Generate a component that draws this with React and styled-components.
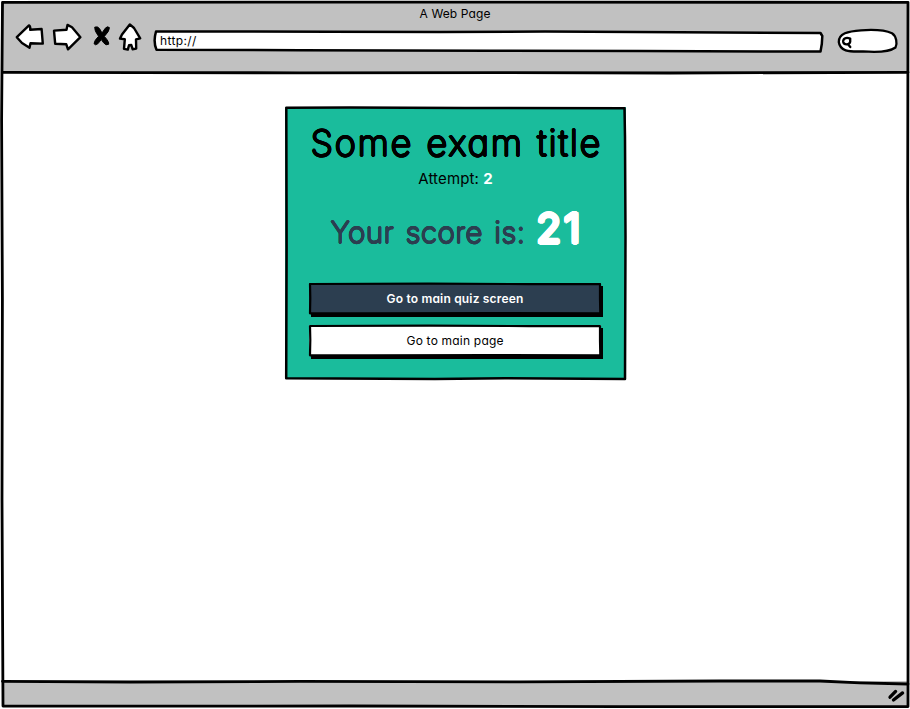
import React from "react";
import styled, { createGlobalStyle } from "styled-components";

const GlobalStyle = createGlobalStyle`
  * { box-sizing: border-box; }
  html, body { margin: 0; padding: 0; background: #fff; overflow: hidden; }
  body { font-family: Inter, "Open Sans", sans-serif; font-feature-settings: "cv11" 1; color: #000; }
`;

const Window = styled.div`
  position: relative;
  width: 910px;
  height: 709px;
  padding: 2px 2px 3px;
  display: flex;
  flex-direction: column;
  background: #fff;
`;

const Chrome = styled.header`
  height: 71px;
  flex: none;
  background: #c1c1c1;
`;

const Title = styled.div`
  height: 20px;
  text-align: center;
`;

const Toolbar = styled.div`
  display: flex;
  height: 31px;
  align-items: flex-start;
  padding-left: 13px;
`;

const NavIcon = styled.svg`
  display: block;
  flex: none;
  width: ${(p) => p.$w}px;
  height: 30px;
  margin-right: ${(p) => p.$gap}px;
  overflow: visible;
  fill: ${(p) => p.$fill || "#fff"};
  stroke: #000;
  stroke-width: ${(p) => p.$line || 2.4};
  stroke-linejoin: round;
  stroke-linecap: round;
`;

const Field = styled.div`
  position: relative;
  display: flex;
  align-items: center;
  width: ${(p) => p.$w}px;
  height: 24px;
  margin-top: 7px;
  margin-right: ${(p) => p.$gap || 0}px;
  padding: 0 0 1px 7px;
`;

const Outline = styled.svg`
  position: absolute;
  inset: 0;
  width: 100%;
  height: 100%;
  overflow: visible;
  pointer-events: none;
  fill: ${(p) => p.$fill || "none"};
  stroke: #000;
  stroke-width: ${(p) => p.$line || 2.5};
  stroke-linejoin: round;
  stroke-linecap: round;
`;

// Thickens a light face evenly in every direction, which rounds the stroke ends.
const rounded = (r, color) =>
  Array.from({ length: 12 }, (_, i) => {
    const a = (i * Math.PI) / 6;
    return `${(r * Math.cos(a)).toFixed(2)}px ${(r * Math.sin(a)).toFixed(2)}px 0 ${color}`;
  }).join(", ");

const Text = styled.span`
  position: relative;
  display: inline-block;
  white-space: pre;
  font-size: ${(p) => p.$size}px;
  line-height: ${(p) => p.$lh || p.$size * 1.3}px;
  font-weight: ${(p) => p.$weight || 400};
  letter-spacing: ${(p) => p.$track || 0}px;
  word-spacing: ${(p) => p.$word || 0}px;
  margin-right: ${(p) => -(p.$track || 0)}px;
  color: ${(p) => p.$color || "#000"};
  text-shadow: ${(p) => (p.$round ? rounded(p.$round, p.$color || "#000") : "none")};
`;

const Page = styled.main`
  flex: 1;
  display: flex;
  justify-content: center;
  align-items: flex-start;
  padding-top: 34px;
`;

const Card = styled.section`
  position: relative;
  width: 341px;
  height: 272px;
  margin-left: 1px;
  padding: 11px 24px 0;
  background: #1abc9c;
  display: flex;
  flex-direction: column;
`;

const Line = styled.div`
  display: flex;
  justify-content: center;
  align-items: baseline;
  height: ${(p) => p.$h}px;
`;

const Actions = styled.div`
  display: flex;
  flex-direction: column;
  gap: 11px;
`;

const Button = styled.button`
  position: relative;
  display: flex;
  align-items: center;
  justify-content: center;
  width: 292px;
  height: 31px;
  padding: 0;
  border: 0;
  font-family: inherit;
  font-feature-settings: inherit;
  background: ${(p) => p.$bg};
  box-shadow: 2px 3px 0 #000;
`;

const StatusBar = styled.footer`
  height: 25px;
  flex: none;
  display: flex;
  justify-content: flex-end;
  align-items: center;
  padding-right: 4px;
  background: #c1c1c1;
`;

const Grip = styled.svg`
  width: 16px;
  height: 14px;
  margin-top: 4px;
  stroke: #000;
  stroke-width: 3.3;
  stroke-linecap: round;
  overflow: visible;
`;

function SketchButton({ bg, children }) {
  return (
    <Button $bg={bg}>
      <Outline $line={2.2} viewBox="0 0 292 31">
        <path d="M1 1L120 .7 220 1.1 291 1 291 16 291.3 30.3 180 30 60 30.4 1 30.3 1.3 15Z" />
      </Outline>
      {children}
    </Button>
  );
}

export default function App() {
  return (
    <>
      <GlobalStyle />
      <Window>
        <Chrome>
          <Title>
            <Text $size={12} $lh={21} $track={0.1}>A Web Page</Text>
          </Title>
          <Toolbar>
            <NavIcon $w={29} $gap={8} viewBox="15 22 29 30">
              <path d="M16.8 37.2 29 25.4Q30.6 26 30.2 29.8L41.6 29 42.8 43.6 30.5 43.2 29.5 47.8 22 43Z" />
            </NavIcon>
            <NavIcon $w={29} $gap={12} viewBox="52 22 29 30">
              <path d="M54 30.6 66.5 29.8 67.5 24.9 72 27.3 80.4 37.2 68 49.3 66.3 44.3 55.2 43.8Z" />
            </NavIcon>
            <NavIcon $w={17} $gap={8} $line={1} $fill="#000" viewBox="93 22 17 30">
              <path d="M95 27.2Q97.5 25.8 99.5 28.6L102 33 105.3 28.2Q107.5 25.8 109.4 27.6 109.8 31 104.3 36.4 109.5 42 108.6 44.3 106 46 103.6 42.8L101.3 39.6 97.8 43.8Q95 45.8 94 43.6 94.3 40.5 98.6 36.3 93.8 29.8 95 27.2Z" />
            </NavIcon>
            <NavIcon $w={23} $gap={12} viewBox="118 22 23 30">
              <path d="M129.8 24.4 134 28 140.2 38.3 136 39.4 136.2 48.6 132.6 49.2 131.3 45 129 45.2 127.8 49.6 124 48.8 124.8 39.3 120 38.6 122 34.5Z" />
            </NavIcon>
            <Field $w={671} $gap={12}>
              <Outline $fill="#fff" viewBox="153 29 671 24">
                <path d="M156 31.5 330 31.7 440 32 545 31.6 680 32.3 820.5 33 822.3 36 821.8 44 820.5 51.6 640 51 490 50.7 300 50.2 156.5 49.7Q153 42 156 31.5Z" />
              </Outline>
              <Text $size={12} $track={0.35}>http://</Text>
            </Field>
            <Field $w={62}>
              <Outline $fill="#fff" $line={2.3} viewBox="836 29 62 24">
                <path d="M838.8 42C838.5 33.5 848 31.2 861 30.3 874 29.4 886 30.5 892 33.2 896.5 36 897.5 44 895.5 47.5 890 51.5 877 52.5 863 51.4 848 52 840 51 838.8 42Z" />
                <path d="M850.2 38.6C845.5 36.8 842.8 39 843.2 42 844 45.2 849.5 45 850.2 41.8L850.2 38.6M848 44.2 850.3 47" />
              </Outline>
            </Field>
          </Toolbar>
        </Chrome>

        <Page>
          <Card>
            <Outline $line={2.5} viewBox="0 0 341 272">
              <path d="M1.3 .8 65 .5 180 1 339.5 1.2 340 30 340.5 130 340 272 220 271.3 150 272.1 1.2 271.3 1.6 140Z" />
            </Outline>
            <Line $h={51}>
              <Text $size={36} $lh={50} $weight={200} $round={0.9} $track={1.75} $word={1.5}>Some exam title</Text>
            </Line>
            <Line $h={33}>
              <Text $size={15} $lh={20} $track={0.15}>Attempt: </Text>
              <Text $size={15} $lh={20} $weight={700} $color="#fff">2</Text>
            </Line>
            <Line $h={81}>
              <Text $size={29.5} $lh={52} $weight={200} $round={0.75} $track={0.5} $word={2.5} $color="#2c3e50">Your score is: </Text>
              <Text $size={41} $lh={52} $weight={400} $color="#fff" $round={1.6} $track={2.5}>21</Text>
            </Line>
            <Actions>
              <SketchButton bg="#2c3e50">
                <Text $size={12} $weight={600} $color="#fff" $track={0.18}>Go to main quiz screen</Text>
              </SketchButton>
              <SketchButton bg="#fff">
                <Text $size={12} $track={0.2}>Go to main page</Text>
              </SketchButton>
            </Actions>
          </Card>
        </Page>

        <StatusBar>
          <Grip viewBox="888 690 16 14">
            <path d="M890 698.2 895.6 692.4M893.5 701 902.6 693.9" />
          </Grip>
        </StatusBar>

        <Outline $line={2.8} viewBox="0 0 910 709">
          <path d="M2.5 2.3 300 2.2 500 2.2 908 2.3 907.7 200 908.2 400 908 706.5 620 706.7 350 706 130 706.2 3 706 2 500 2.4 300 1.6 120Z" />
          <path d="M2.5 72.4 140 72.7 300 72.8 500 72.7 670 73 908 72.3" />
          <path d="M2.5 681.3 130 682 300 681.4 520 681.8 720 681 820 681 860 682.8 908 684" />
        </Outline>
      </Window>
    </>
  );
}
